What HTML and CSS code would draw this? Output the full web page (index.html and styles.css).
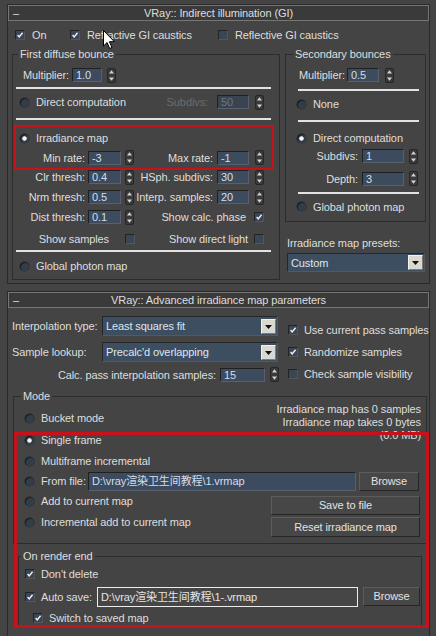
FILE: index.html
```html
<!DOCTYPE html>
<html lang="en">
<head>
<meta charset="utf-8">
<title>VRay GI</title>
<link rel="stylesheet" href="styles.css">
</head>
<body>
<div class="panel">
  <section class="rollout r1">
    <div class="rtitle"><span class="dash">–</span><span class="rtext">VRay:: Indirect illumination (GI)</span><span></span></div>
    <div class="toprow">
      <label class="chk"><span class="cb"><svg viewBox="0 0 10 10"><path d="M2 5l2 2.5L8.2 2.2"/></svg></span>On</label>
      <label class="chk"><span class="cb"><svg viewBox="0 0 10 10"><path d="M2 5l2 2.5L8.2 2.2"/></svg></span>Refractive GI caustics</label>
      <label class="chk"><span class="cb"></span>Reflective GI caustics</label>
    </div>
    <div class="gi-cols">
      <fieldset class="grp g1">
        <legend>First diffuse bounce</legend>
        <div class="gb1">
          <div class="mult1"><span>Multiplier:</span><span class="inp w30">1.0</span><svg class="spin" viewBox="0 0 9 15"><rect x=".5" y=".5" width="8" height="14" rx="1.5"/><path class="ar" d="M4.5 2.3 7 5.5H2z"/><path class="ar" d="M4.5 12.7 7 9.5H2z"/></svg></div>
          <div class="sep sep-a"></div>
          <div class="g6 dc-row">
            <label class="rad c13"><span class="rb"></span>Direct computation</label>
            <span class="l4 dim">Subdivs:</span><span class="inp dis">50</span><svg class="spin s6" viewBox="0 0 9 15"><rect x=".5" y=".5" width="8" height="14" rx="1.5"/><path class="ar" d="M4.5 2.3 7 5.5H2z"/><path class="ar" d="M4.5 12.7 7 9.5H2z"/></svg>
          </div>
          <div class="sep sep-b"></div>
          <div class="redbox">
            <div class="irr-row"><label class="rad"><span class="rb sel"></span>Irradiance map</label></div>
            <div class="g6 rate-row">
              <span class="l1">Min rate:</span><span class="inp">-3</span><svg class="spin s3" viewBox="0 0 9 15"><rect x=".5" y=".5" width="8" height="14" rx="1.5"/><path class="ar" d="M4.5 2.3 7 5.5H2z"/><path class="ar" d="M4.5 12.7 7 9.5H2z"/></svg>
              <span class="l4">Max rate:</span><span class="inp">-1</span><svg class="spin s6" viewBox="0 0 9 15"><rect x=".5" y=".5" width="8" height="14" rx="1.5"/><path class="ar" d="M4.5 2.3 7 5.5H2z"/><path class="ar" d="M4.5 12.7 7 9.5H2z"/></svg>
            </div>
          </div>
          <div class="g6 trow">
            <span class="l1">Clr thresh:</span><span class="inp">0.4</span><svg class="spin s3" viewBox="0 0 9 15"><rect x=".5" y=".5" width="8" height="14" rx="1.5"/><path class="ar" d="M4.5 2.3 7 5.5H2z"/><path class="ar" d="M4.5 12.7 7 9.5H2z"/></svg>
            <span class="l4">HSph. subdivs:</span><span class="inp">30</span><svg class="spin s6" viewBox="0 0 9 15"><rect x=".5" y=".5" width="8" height="14" rx="1.5"/><path class="ar" d="M4.5 2.3 7 5.5H2z"/><path class="ar" d="M4.5 12.7 7 9.5H2z"/></svg>
          </div>
          <div class="g6 trow">
            <span class="l1">Nrm thresh:</span><span class="inp">0.5</span><svg class="spin s3" viewBox="0 0 9 15"><rect x=".5" y=".5" width="8" height="14" rx="1.5"/><path class="ar" d="M4.5 2.3 7 5.5H2z"/><path class="ar" d="M4.5 12.7 7 9.5H2z"/></svg>
            <span class="l4">Interp. samples:</span><span class="inp">20</span><svg class="spin s6" viewBox="0 0 9 15"><rect x=".5" y=".5" width="8" height="14" rx="1.5"/><path class="ar" d="M4.5 2.3 7 5.5H2z"/><path class="ar" d="M4.5 12.7 7 9.5H2z"/></svg>
          </div>
          <div class="g6 trow">
            <span class="l1">Dist thresh:</span><span class="inp">0.1</span><svg class="spin s3" viewBox="0 0 9 15"><rect x=".5" y=".5" width="8" height="14" rx="1.5"/><path class="ar" d="M4.5 2.3 7 5.5H2z"/><path class="ar" d="M4.5 12.7 7 9.5H2z"/></svg>
            <span class="l45 pr3">Show calc. phase</span><span class="cb k6"><svg viewBox="0 0 10 10"><path d="M2 5l2 2.5L8.2 2.2"/></svg></span>
          </div>
          <div class="g6 show-row">
            <span class="l12">Show samples</span><span class="cb k3"></span>
            <span class="l45 pr1">Show direct light</span><span class="cb k6"></span>
          </div>
          <div class="sep sep-c"></div>
          <div class="glob-row"><label class="rad"><span class="rb"></span>Global photon map</label></div>
        </div>
      </fieldset>
      <div class="col2">
        <fieldset class="grp g2">
          <legend>Secondary bounces</legend>
          <div class="gb2">
            <div class="mult2"><span>Multiplier:</span><span class="inp w32">0.5</span><svg class="spin" viewBox="0 0 9 15"><rect x=".5" y=".5" width="8" height="14" rx="1.5"/><path class="ar" d="M4.5 2.3 7 5.5H2z"/><path class="ar" d="M4.5 12.7 7 9.5H2z"/></svg></div>
            <div class="sep sep2 s2a"></div>
            <div class="r2row none-row"><label class="rad"><span class="rb"></span>None</label></div>
            <div class="sep sep2 s2b"></div>
            <div class="r2row dc2-row"><label class="rad"><span class="rb sel"></span>Direct computation</label></div>
            <div class="g3 sub-row"><span class="l3">Subdivs:</span><span class="inp">1</span><svg class="spin" viewBox="0 0 9 15"><rect x=".5" y=".5" width="8" height="14" rx="1.5"/><path class="ar" d="M4.5 2.3 7 5.5H2z"/><path class="ar" d="M4.5 12.7 7 9.5H2z"/></svg></div>
            <div class="g3 depth-row"><span class="l3">Depth:</span><span class="inp">3</span><svg class="spin" viewBox="0 0 9 15"><rect x=".5" y=".5" width="8" height="14" rx="1.5"/><path class="ar" d="M4.5 2.3 7 5.5H2z"/><path class="ar" d="M4.5 12.7 7 9.5H2z"/></svg></div>
            <div class="sep sep2 s2c"></div>
            <div class="r2row glob2-row"><label class="rad"><span class="rb"></span>Global photon map</label></div>
          </div>
        </fieldset>
        <div class="presets-label">Irradiance map presets:</div>
        <div class="dropdown presets"><span class="dd-text">Custom</span><span class="dd-btn"><svg viewBox="0 0 13 13"><path d="M3 5h7l-3.5 4z"/></svg></span></div>
      </div>
    </div>
  </section>

  <section class="rollout r2">
    <div class="rtitle"><span class="dash">–</span><span class="rtext">VRay:: Advanced irradiance map parameters</span><span></span></div>
    <div class="adv-top">
      <div class="adv-left">
        <div class="dd-row"><span class="dd-label">Interpolation type:</span><div class="dropdown wide"><span class="dd-text">Least squares fit</span><span class="dd-btn"><svg viewBox="0 0 13 13"><path d="M3 5h7l-3.5 4z"/></svg></span></div></div>
        <div class="dd-row dd-row2"><span class="dd-label">Sample lookup:</span><div class="dropdown wide"><span class="dd-text">Precalc'd overlapping</span><span class="dd-btn"><svg viewBox="0 0 13 13"><path d="M3 5h7l-3.5 4z"/></svg></span></div></div>
        <div class="calc-row"><span>Calc. pass interpolation samples:</span><span class="inp w45">15</span><svg class="spin" viewBox="0 0 9 15"><rect x=".5" y=".5" width="8" height="14" rx="1.5"/><path class="ar" d="M4.5 2.3 7 5.5H2z"/><path class="ar" d="M4.5 12.7 7 9.5H2z"/></svg></div>
      </div>
      <div class="adv-right">
        <label class="chk"><span class="cb"><svg viewBox="0 0 10 10"><path d="M2 5l2 2.5L8.2 2.2"/></svg></span>Use current pass samples</label>
        <label class="chk"><span class="cb"><svg viewBox="0 0 10 10"><path d="M2 5l2 2.5L8.2 2.2"/></svg></span>Randomize samples</label>
        <label class="chk"><span class="cb"></span>Check sample visibility</label>
      </div>
    </div>

    <fieldset class="grp mode">
      <legend>Mode</legend>
      <div class="mb">
        <div class="mode-top">
          <label class="rad bucket"><span class="rb"></span>Bucket mode</label>
          <div class="info">Irradiance map has 0 samples<br>Irradiance map takes 0 bytes<br>(0.0 MB)</div>
          <label class="rad single"><span class="rb sel"></span>Single frame</label>
        </div>
        <div class="mrow multi"><label class="rad"><span class="rb"></span>Multiframe incremental</label></div>
        <div class="from-row">
          <label class="rad"><span class="rb"></span>From file:</label>
          <span class="inp path">D:\vray渲染卫生间教程\1.vrmap</span>
          <span class="btn browse">Browse</span>
        </div>
        <div class="add-sec">
          <div class="add-left">
            <div class="mrow"><label class="rad"><span class="rb"></span>Add to current map</label></div>
            <div class="mrow incr"><label class="rad"><span class="rb"></span>Incremental add to current map</label></div>
          </div>
          <div class="add-right">
            <span class="btn save">Save to file</span>
            <span class="btn reset">Reset irradiance map</span>
          </div>
        </div>
      </div>
    </fieldset>

    <fieldset class="grp ore">
      <legend>On render end</legend>
      <div class="ob">
        <div class="orow dd"><label class="chk"><span class="cb"><svg viewBox="0 0 10 10"><path d="M2 5l2 2.5L8.2 2.2"/></svg></span>Don't delete</label></div>
        <div class="auto-row">
          <label class="chk"><span class="cb"><svg viewBox="0 0 10 10"><path d="M2 5l2 2.5L8.2 2.2"/></svg></span>Auto save:</label>
          <span class="autopath">D:\vray渲染卫生间教程\1-.vrmap</span>
          <span class="btn browse2">Browse</span>
        </div>
        <div class="orow sw"><label class="chk"><span class="cb"><svg viewBox="0 0 10 10"><path d="M2 5l2 2.5L8.2 2.2"/></svg></span>Switch to saved map</label></div>
      </div>
    </fieldset>

    <div class="redmark"></div>
  </section>

  <svg class="cursor" viewBox="0 0 12 19" width="12" height="19"><path d="M.5.5v15.5l3.6-3.5 2.6 6 2.3-1-2.6-5.8h5z" fill="#fff" stroke="#000" stroke-width="1"/></svg>
</div>
</body>
</html>
```

FILE: styles.css
```css
* { box-sizing: border-box; }
html, body { margin: 0; padding: 0; }
body {
  background: #444444;
  width: 436px;
  height: 636px;
  overflow: hidden;
  font-family: "Liberation Sans", Arial, "Noto Sans CJK SC", sans-serif;
  font-size: 11px;
  line-height: 14px;
  letter-spacing: -0.1px;
  color: #dedede;
}
label { cursor: default; }

.panel { position: relative; padding: 4px 0 0 7px; height: 636px; }

.rollout { width: 423px; border: 1px solid #2a2a2a; }
.r1 { padding-bottom: 3px; }
.r2 { margin-top: 7px; position: relative; height: 350px; }

.rtitle {
  height: 16px;
  border: 1px solid #767676;
  background: #3a3a3a;
  display: grid;
  grid-template-columns: 20px 1fr 20px;
  align-items: center;
  line-height: 14px;
}
.dash { padding-left: 4px; }
.rtext { text-align: center; }

/* checkboxes / radios */
.chk, .rad { display: flex; align-items: center; white-space: nowrap; }
.chk { gap: 7px; }
.rad { gap: 7px; }
.cb {
  display: inline-block;
  flex: none;
  width: 10px;
  height: 10px;
  background: #3a4656;
  border: 1px solid #232323;
  border-right-color: #565656;
  border-bottom-color: #565656;
}
.cb svg { display: block; width: 8px; height: 8px; }
.cb path { fill: none; stroke: #f2f4f8; stroke-width: 1.7; }
.rb {
  display: inline-block;
  flex: none;
  width: 9px;
  height: 9px;
  border-radius: 50%;
  background: #323d4a;
  box-shadow: inset 1px 1px 0 #1e1e1e, 0 0 0 0.5px #2a2a2a;
}
.rb.sel { background: radial-gradient(circle, #f6f6f6 0 1.8px, #323d4a 2.6px); }

/* inputs & spinners */
.inp {
  display: block;
  height: 14px;
  line-height: 13px;
  padding-left: 3px;
  background: #3c4b5d;
  color: #d4dee9;
  border: 1px solid #202020;
  border-right-color: #586070;
  border-bottom-color: #586070;
  white-space: nowrap;
  overflow: hidden;
}
.inp.dis { background: #3a4451; color: #6b7682; }
.w30 { width: 30px; }
.w32 { width: 32px; }
.w45 { width: 45px; }
.spin { display: block; width: 9px; height: 15px; flex: none; }
.spin rect { fill: #3a3a3a; stroke: #262626; }
.spin .ar { fill: #d2d2d2; }

.sep { height: 2px; background: #e2e2e2; }

/* top row */
.toprow {
  margin-top: 7px;
  height: 14px;
  padding-left: 7px;
  display: grid;
  grid-template-columns: 55px 148px auto;
  align-items: center;
}

/* group boxes */
.gi-cols {
  margin-top: 6px;
  display: grid;
  grid-template-columns: 268px 141px;
  column-gap: 5px;
  padding-left: 4px;
  align-items: start;
}
fieldset.grp { margin: 0; padding: 0; border: 1px solid #2c2c2c; min-width: 0; }
fieldset.grp legend { padding: 0 2px; height: 13px; line-height: 13px; }
fieldset.g1 legend { margin-left: 5px; }
fieldset.g2 legend { margin-left: 7px; }

.gb1 { padding: 0 8px 3px 4px; }
.mult1 { margin-top: 4px; height: 20px; display: flex; align-items: center; padding-left: 6px; }
.mult1 .inp { margin-left: 3px; }
.mult1 .spin { margin-left: 5px; }
.gb1 .sep { margin-left: -1px; }
.sep-a { margin-top: 2px; }
.sep-b { margin-top: 6px; }
.sep-c { margin-top: 1px; }

.g6 {
  display: grid;
  grid-template-columns: 71px 33px 13px 83px 32px 14px;
  align-items: center;
}
.g6 .inp { width: 100%; }
.l1 { text-align: right; padding-right: 3px; white-space: nowrap; }
.l4 { text-align: right; padding-right: 4px; white-space: nowrap; }
.l45 { grid-column: 4 / 6; text-align: right; white-space: nowrap; }
.l12 { grid-column: 1 / 3; text-align: right; padding-right: 12px; white-space: nowrap; }
.pr3 { padding-right: 3px; }
.pr1 { padding-right: 1px; }
.s3, .k3 { margin-left: 4px; }
.s6 { margin-left: 6px; }
.k6 { margin-left: 5px; }
.c13 { grid-column: 1 / 4; }
.dim { color: #6c6c6c; padding-right: 9px; }

.dc-row { margin-top: 3px; height: 20px; }
.dc-row .rad, .irr-row .rad, .glob-row .rad { padding-left: 3px; }
.redbox { margin-top: 8px; outline: 2px solid #c8111b; outline-offset: 1px; }
.irr-row { height: 20px; display: flex; align-items: center; }
.rate-row { height: 19px; }
.trow { height: 20px; }
.show-row { margin-top: 2px; height: 20px; }
.glob-row { margin-top: 4px; height: 20px; display: flex; align-items: center; }

/* secondary bounces */
.gb2 { padding-bottom: 5px; }
.mult2 { margin-top: 4px; height: 20px; display: flex; align-items: center; padding-left: 13px; }
.mult2 .inp { margin-left: 2px; }
.mult2 .spin { margin-left: 6px; }
.sep2 { margin-left: 12px; width: 121px; }
.s2a { margin-top: 4px; }
.s2b { margin-top: 6px; }
.s2c { margin-top: 4px; }
.r2row { display: flex; align-items: center; padding-left: 11px; }
.none-row { margin-top: 3px; height: 20px; }
.dc2-row { margin-top: 7px; height: 18px; }
.glob2-row { margin-top: 3px; height: 19px; }
.g3 { display: grid; grid-template-columns: 76px 42px auto; align-items: center; }
.g3 .inp { width: 100%; }
.g3 .spin { margin-left: 5px; }
.l3 { text-align: right; padding-right: 4px; }
.sub-row { height: 18px; }
.depth-row { margin-top: 4px; height: 19px; }

.presets-label { margin-top: 14px; padding-left: 2px; height: 14px; white-space: nowrap; }

.dropdown {
  display: flex;
  align-items: center;
  justify-content: space-between;
  background: #3d4e61;
  color: #dfe6ee;
  border: 1px solid #262626;
  border-right-color: #585858;
  border-bottom-color: #585858;
}
.presets { margin: 3px 0 0 2px; width: 138px; height: 19px; }
.dd-text { padding-left: 3px; }
.dd-btn {
  width: 15px;
  height: 15px;
  margin-right: 1px;
  background: #d9d9d2;
  border: 1px solid #f2f2ee;
  border-right-color: #7d7d7d;
  border-bottom-color: #7d7d7d;
}
.dd-btn svg { display: block; width: 13px; height: 13px; }
.dd-btn path { fill: #111; }

/* advanced rollout */
.adv-top { margin-top: 7px; display: flex; padding-left: 4px; }
.adv-left { width: 268px; }
.dd-row { height: 22px; display: flex; align-items: center; }
.dd-row2 { margin-top: 4px; }
.dd-label { width: 90px; white-space: nowrap; }
.dropdown.wide { width: 176px; height: 20px; }
.calc-row { margin-top: 2px; height: 19px; display: flex; align-items: center; justify-content: flex-end; padding-right: 1px; }
.calc-row .inp { margin-left: 4px; }
.calc-row .spin { margin-left: 5px; }
.adv-right { margin-left: 8px; padding-top: 5px; display: flex; flex-direction: column; gap: 2px; }
.adv-right .chk { height: 20px; gap: 6px; }

fieldset.mode { margin: 6px 2px 0 5px; }
fieldset.mode legend { margin-left: 7px; }
.mb { padding: 0 6px 6px 11px; }
.mode-top { display: grid; grid-template-columns: 1fr auto; grid-template-rows: 27px 20px; }
.bucket { grid-column: 1; grid-row: 1; align-self: start; margin-top: 8px; }
.info { grid-column: 2; grid-row: 1 / 3; text-align: right; line-height: 13px; margin-right: -1px; white-space: nowrap; }
.single { grid-column: 1; grid-row: 2; }
.mrow { height: 20px; display: flex; align-items: center; }
.multi { margin-top: 1px; }
.incr { margin-top: 1px; }
.from-row { height: 20px; display: grid; grid-template-columns: 63px 268px auto; align-items: center; }
.path { height: 19px; line-height: 17px; }
.btn {
  display: block;
  text-align: center;
  background: #474747;
  color: #e2e2e2;
  border: 1px solid #5c5c5c;
  border-right-color: #262626;
  border-bottom-color: #262626;
  white-space: nowrap;
}
.browse { margin-left: 3px; width: 60px; height: 19px; line-height: 17px; }
.add-sec { display: flex; justify-content: space-between; }
.add-right { margin-top: 5px; display: flex; flex-direction: column; gap: 2px; }
.save { width: 149px; height: 19px; line-height: 17px; }
.reset { width: 149px; height: 20px; line-height: 18px; }

fieldset.ore { margin: 6px 7px 0 10px; }
fieldset.ore legend { margin-left: 2px; }
.ob { padding-left: 6px; }
.ob .chk { gap: 6px; }
.orow { display: flex; align-items: center; }
.dd { margin-top: 1px; height: 20px; }
.auto-row { margin-top: 2px; height: 21px; display: grid; grid-template-columns: 72px 261px auto; align-items: center; }
.autopath {
  display: block;
  height: 20px;
  line-height: 18px;
  padding-left: 3px;
  border: 1px solid #ececec;
  background: #464646;
  color: #e4e4e4;
  white-space: nowrap;
  overflow: hidden;
}
.browse2 { margin-left: 5px; width: 57px; height: 19px; line-height: 17px; }
.sw { margin-top: 2px; height: 18px; padding-left: 8px; }

.redmark {
  position: absolute;
  left: 6px;
  top: 140px;
  width: 415px;
  height: 196px;
  border: 3px solid #c8111b;
  pointer-events: none;
}

.cursor { position: absolute; left: 103px; top: 30px; }
```
